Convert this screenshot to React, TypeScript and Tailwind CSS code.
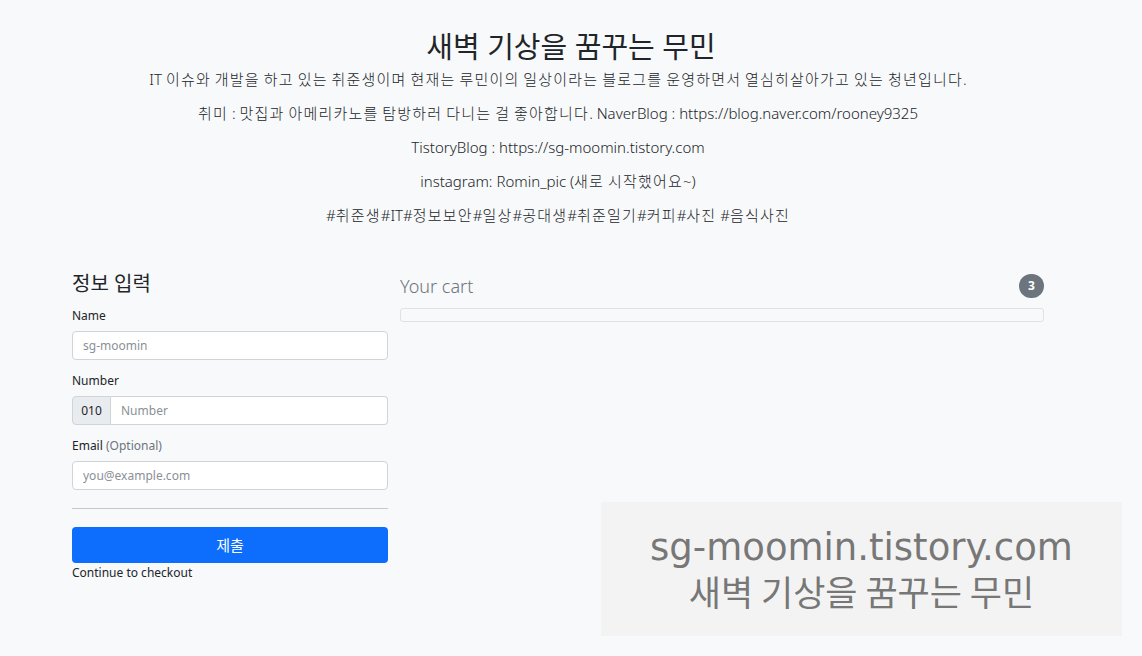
import React from "react";

const font = { fontFamily: '"Noto Sans", "Noto Sans CJK KR", sans-serif' };

const intro = [
  "IT 이슈와 개발을 하고 있는 취준생이며 현재는 루민이의 일상이라는 블로그를 운영하면서 열심히살아가고 있는 청년입니다.",
  "취미 : 맛집과 아메리카노를 탐방하러 다니는 걸 좋아합니다. NaverBlog : https://blog.naver.com/rooney9325",
  "TistoryBlog : https://sg-moomin.tistory.com",
  "instagram: Romin_pic (새로 시작했어요~)",
  "#취준생#IT#정보보안#일상#공대생#취준일기#커피#사진 #음식사진",
];

// hangul in the reference runs a little wider than Noto CJK, so space those runs out
function Spaced({ text }: { text: string }) {
  return (
    <>
      {text.split(/([\uAC00-\uD7A3]+)/).map((part, i) =>
        /[\uAC00-\uD7A3]/.test(part) ? (
          <span key={i} className="tracking-[1.2px]">
            {part}
          </span>
        ) : (
          part
        )
      )}
    </>
  );
}

function Field({ label, extra, placeholder, last }: { label: string; extra?: string; placeholder: string; last?: boolean }) {
  return (
    <div className={last ? "" : "mb-[12px]"}>
      <label className="block text-[12px] leading-[18px] mb-[6px]">
        {label}
        {extra && <span className="text-[#6c757d]"> {extra}</span>}
      </label>
      <input
        placeholder={placeholder}
        className="w-full h-[29px] px-[10px] text-[12px] bg-white border border-[#ced4da] rounded-[4px] placeholder:text-[#8a9096] outline-none"
      />
    </div>
  );
}

export default function App() {
  return (
    <div className="min-h-[656px] bg-[#f8f9fa] text-[#212529] relative overflow-hidden" style={font}>
      {/* Header */}
      <div className="pt-[29px] text-center">
        <h2 className="text-[29px] leading-[36px] font-normal mb-[4px]">새벽 기상을 꿈꾸는 무민</h2>
        <div className="pr-[26px]">
          {intro.map((line) => (
            <p key={line} className="text-[15px] leading-[20px] mb-[14px] font-light">
              <Spaced text={line} />
            </p>
          ))}
        </div>
      </div>

      {/* Main */}
      <div className="flex gap-[12px] pl-[72px] pt-[32px]">
        <div className="w-[316px] shrink-0">
          <h4 className="text-[20px] leading-[26px] mb-[10px]">정보 입력</h4>
          <Field label="Name" placeholder="sg-moomin" />
          <div className="mb-[12px]">
            <label className="block text-[12px] leading-[18px] mb-[6px]">Number</label>
            <div className="flex h-[29px]">
              <span className="w-[39px] flex items-center justify-center text-[12px] bg-[#e9ecef] border border-[#ced4da] rounded-l-[4px]">
                010
              </span>
              <input
                placeholder="Number"
                className="flex-1 min-w-0 px-[10px] text-[12px] bg-white border border-l-0 border-[#ced4da] rounded-r-[4px] placeholder:text-[#8a9096] outline-none"
              />
            </div>
          </div>
          <Field label="Email" extra="(Optional)" placeholder="you@example.com" last />
          <hr className="border-0 border-t border-[#c6c8ca] mt-[18px] mb-[18px]" />
          <button className="w-full h-[36px] bg-[#0d6efd] text-white text-[15px] rounded-[4px]">제출</button>
          <p className="text-[12px] leading-[18px] mt-[1px]">Continue to checkout</p>
        </div>

        <div className="w-[644px] shrink-0">
          <div className="flex items-center justify-between h-[28px] mt-[1px]">
            <span className="text-[18px] text-[#6c757d] font-light">Your cart</span>
            <span className="w-[25px] h-[24px] rounded-full bg-[#6c757d] text-white text-[12px] font-bold flex items-center justify-center">
              3
            </span>
          </div>
          <div className="mt-[8px] h-[14px] border border-[#dee2e6] rounded-[3px]" />
        </div>
      </div>

      {/* Watermark */}
      <div className="absolute left-[601px] top-[502px] w-[521px] h-[134px] bg-[#f3f3f3] flex flex-col items-center justify-center text-[#777]">
        <span className="text-[37px] leading-[43px]" style={{ fontFamily: '"DejaVu Sans", sans-serif' }}>
          sg-moomin.tistory.com
        </span>
        <span className="text-[35px] leading-[43px]" style={{ fontFamily: '"Noto Sans CJK KR", sans-serif' }}>
          새벽 기상을 꿈꾸는 무민
        </span>
      </div>
    </div>
  );
}
